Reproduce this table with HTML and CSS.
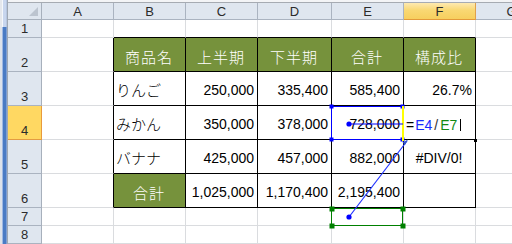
FILE: index.html
```html
<!DOCTYPE html>
<html lang="ja">
<head>
<meta charset="utf-8">
<link rel="stylesheet" href="styles.css">
</head>
<body>
<div class="app">
  <div class="strip"><div class="strip-top"></div><div class="strip-bar"></div></div>
  <div class="main">
    <div class="topbar"></div>
    <div class="sheet">
      <div class="corner"><span class="tri"></span></div>
      <div class="ch">A</div><div class="ch">B</div><div class="ch">C</div><div class="ch">D</div><div class="ch">E</div><div class="ch sel">F</div><div class="ch">G</div>

      <div class="rh">1</div>
      <div class="c"></div><div class="c tt"></div><div class="c tt"></div><div class="c tt"></div><div class="c tt"></div><div class="c tt"></div><div class="c"></div>

      <div class="rh">2</div>
      <div class="c tl"></div><div class="c t g">商品名</div><div class="c t g">上半期</div><div class="c t g">下半期</div><div class="c t g">合計</div><div class="c t g">構成比</div><div class="c"></div>

      <div class="rh">3</div>
      <div class="c tl"></div><div class="c t jp">りんご</div><div class="c t n">250,000</div><div class="c t n">335,400</div><div class="c t n">585,400</div><div class="c t n">26.7%</div><div class="c"></div>

      <div class="rh sel">4</div>
      <div class="c tl"></div><div class="c t jp">みかん</div><div class="c t n">350,000</div><div class="c t n">378,000</div><div class="c t n">728,000</div><div class="c t edit"><span>=</span><span class="ref-b">E4</span><span class="slash">/</span><span class="ref-g">E7</span><span class="caret"></span></div><div class="c"></div>

      <div class="rh">5</div>
      <div class="c tl"></div><div class="c t jp">バナナ</div><div class="c t n">425,000</div><div class="c t n">457,000</div><div class="c t n">882,000</div><div class="c t ctr">#DIV/0!</div><div class="c"></div>

      <div class="rh">6</div>
      <div class="c tl"></div><div class="c t g">合計</div><div class="c t n">1,025,000</div><div class="c t n">1,170,400</div><div class="c t n">2,195,400</div><div class="c t"></div><div class="c"></div>

      <div class="rh">7</div>
      <div class="c"></div><div class="c"></div><div class="c"></div><div class="c"></div><div class="c"></div><div class="c"></div><div class="c"></div>

      <div class="rh">8</div>
      <div class="c"></div><div class="c"></div><div class="c"></div><div class="c"></div><div class="c"></div><div class="c"></div><div class="c"></div>
    </div>
  </div>
</div>
<svg class="overlay" width="512" height="244" viewBox="0 0 512 244">
  <!-- E4 precedent box -->
  <rect x="331.5" y="106.5" width="71" height="33" fill="none" stroke="#0000ff" stroke-width="1"/>
  <rect x="329.5" y="104.5" width="4" height="4" fill="#0000ff"/>
  <rect x="329.5" y="137.5" width="4" height="4" fill="#0000ff"/>
  <rect x="400.5" y="104.5" width="4" height="4" fill="#0000ff"/>
  <rect x="400.5" y="137.5" width="4" height="4" fill="#0000ff"/>
  <rect x="402" y="106" width="2" height="35" fill="#ffff00"/>
  <!-- E7 precedent box -->
  <rect x="331.5" y="208.5" width="71" height="17" fill="none" stroke="#008000" stroke-width="1"/>
  <rect x="329.5" y="206.5" width="5" height="5" fill="#008000"/>
  <rect x="400.5" y="206.5" width="5" height="5" fill="#008000"/>
  <rect x="329.5" y="223.5" width="5" height="5" fill="#008000"/>
  <rect x="400.5" y="223.5" width="5" height="5" fill="#008000"/>
  <!-- tracer arrows -->
  <line x1="349" y1="124" x2="403" y2="124" stroke="#0000ff" stroke-width="1"/>
  <circle cx="349" cy="124" r="2.6" fill="#0000ff"/>
  <line x1="349" y1="217" x2="407" y2="141" stroke="#2233ff" stroke-width="1.2"/>
  <circle cx="349" cy="217" r="2.6" fill="#0000ff"/>
  <polygon points="408,139.5 402.5,142.5 405,145" fill="#3355cc"/>
  <rect x="474" y="139" width="3" height="3" fill="#000"/>
</svg>
</body>
</html>
```
FILE: styles.css
```css
html, body {
  margin: 0;
  padding: 0;
  width: 512px;
  height: 244px;
  overflow: hidden;
  background: #ffffff;
}

.app {
  display: flex;
  width: 512px;
  height: 244px;
  overflow: hidden;
}

.strip {
  width: 8px;
  display: flex;
  flex-direction: column;
  flex: none;
}

.strip-top {
  height: 27px;
  background: linear-gradient(to right, #e4e7ec 0 2px, #f4f7fb 2px 3px, #c8d6ee 3px 6px, #b7c6df 6px 7px, #9ea7b3 7px 8px);
}

.strip-bar {
  flex: 1;
  background: linear-gradient(to right, #dde2ea 0 2px, #9fb8e2 2px 3px, #4a7bc4 3px 6px, #7d9ed3 6px 7px, #9ea7b3 7px 8px);
}

.main {
  flex: none;
  width: 576px;
  display: flex;
  flex-direction: column;
}

.topbar {
  height: 3px;
  background: #f3f4f6;
  border-bottom: 1px solid #a6abb2;
}

.sheet {
  display: grid;
  grid-template-columns: 34px 72px 72px 72px 74px 72px 72px 72px;
  grid-template-rows: 17px 18px 34px 34px 34px 34px 34px 18px 18px;
  font-family: "Liberation Sans", "Noto Sans CJK JP", sans-serif;
  font-size: 14px;
  color: #000;
}

.sheet > div {
  box-sizing: border-box;
  border-right: 1px solid #dadcdf;
  border-bottom: 1px solid #dadcdf;
  min-width: 0;
  overflow: hidden;
  white-space: nowrap;
}

.corner {
  position: relative;
  background: #dfe6ef;
  border-right-color: #a7b0bc !important;
  border-bottom-color: #a7b0bc !important;
}

.tri {
  position: absolute;
  right: 3px;
  bottom: 3px;
  width: 0;
  height: 0;
  border-left: 9px solid transparent;
  border-bottom: 9px solid #bcc4cf;
}

.ch {
  background: #dfe6ef;
  border-right-color: #aab3c0 !important;
  border-bottom-color: #aab3c0 !important;
  display: flex;
  align-items: center;
  justify-content: center;
  font-size: 13px;
  color: #2b2b2b;
  padding-top: 1px;
}

.ch.sel {
  background: linear-gradient(#fde9b0, #f9d873 45%, #f7cf5e);
  border-right-color: #e0a04a !important;
  border-bottom-color: #e49a3a !important;
}

.rh {
  background: #dfe6ef;
  border-right-color: #a7b0bc !important;
  border-bottom-color: #aab3c0 !important;
  display: flex;
  align-items: flex-end;
  justify-content: center;
  font-size: 13px;
  line-height: 15px;
  color: #2b2b2b;
  padding-bottom: 1px;
}

.rh.sel {
  background: #ffd862;
  border-right-color: #e89a3c !important;
  border-bottom-color: #e39b42 !important;
}

.c {
  display: flex;
  align-items: center;
  padding: 2px 3px 0 2px;
}

.tt {
  border-bottom-color: #000 !important;
}

.tl {
  border-right-color: #000 !important;
}

.t {
  border-right-color: #000 !important;
  border-bottom-color: #000 !important;
}

.g {
  background: #76923c;
  color: #ffffff;
  justify-content: center;
  font-family: "Noto Sans CJK JP", sans-serif;
  font-size: 15px;
  font-weight: 300;
  letter-spacing: 1px;
  padding-top: 3px;
}

.jp {
  font-family: "Noto Sans CJK JP", sans-serif;
  font-size: 15px;
  font-weight: 300;
  justify-content: flex-start;
}

.n {
  justify-content: flex-end;
}

.ctr {
  justify-content: center;
}

.edit {
  justify-content: flex-start;
  padding-left: 2px;
  padding-top: 4px;
}

.ref-b {
  color: #1a2cff;
  padding-left: 1px;
}

.ref-g {
  color: #138a13;
}

.slash {
  color: #333;
  padding: 0 2px;
}

.caret {
  display: inline-block;
  width: 1px;
  height: 12px;
  background: #000;
  margin-left: 3px;
}

.overlay {
  position: absolute;
  left: 0;
  top: 0;
  pointer-events: none;
}
```
